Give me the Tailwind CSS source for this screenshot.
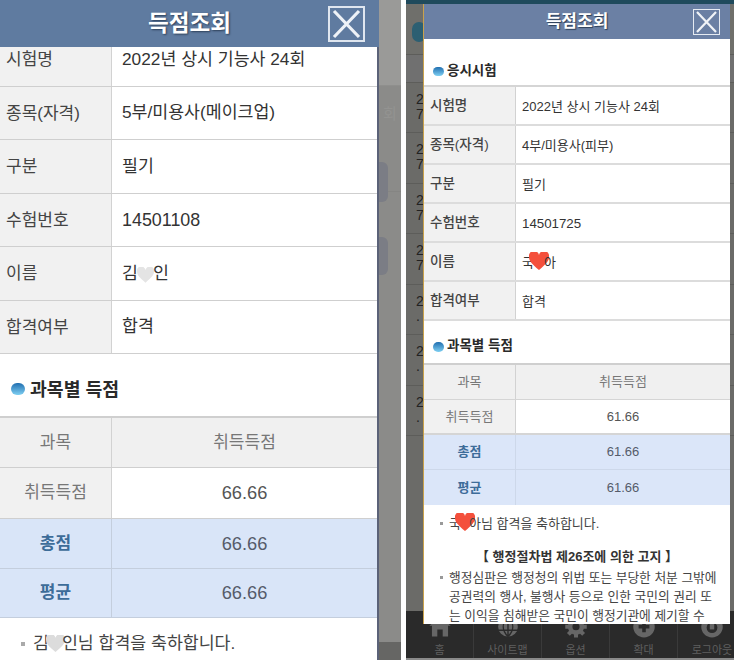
<!DOCTYPE html>
<html lang="ko">
<head>
<meta charset="utf-8">
<script src="https://cdn.jsdelivr.net/npm/@tailwindcss/browser@4"></script>
</head>
<body class="bg-white font-['Liberation_Sans','Noto_Sans_CJK_KR',sans-serif]">
<div class="flex w-[734px] h-[660px] overflow-hidden bg-white">

  <!-- LEFT PHONE -->
  <section class="relative w-[401px] h-[660px] shrink-0 overflow-hidden bg-[#8b8b89]">
    <div class="flex flex-col h-full">
      <div class="h-[86px] bg-[#9a9a98] border-b border-[#8f8f8d]"></div>
      <div class="h-[106px] border-b border-[#858583] pl-[383px] pt-[17px] text-[15px] text-[#939391]">회</div>
      <div class="flex-1"></div>
      <div class="h-[18px] bg-[#666664]"></div>
    </div>
    <div class="absolute left-[378px] top-[162px] w-[10px] h-[40px] rounded-r-md bg-[#7b7d85]"></div>
    <div class="absolute left-[378px] top-[237px] w-[10px] h-[38px] rounded-r-md bg-[#7b7d85]"></div>

    <div class="absolute left-0 top-0 w-[379px] h-[660px] flex flex-col">
      <header class="relative h-[47px] shrink-0 bg-[#5f7ba0] flex items-center justify-center">
        <h1 class="text-[22.5px] font-bold text-white [text-shadow:1px_1px_2px_#2c3e57]">득점조회</h1>
        <div class="absolute left-[328px] top-[6px] w-[37px] h-[36px] border-2 border-[#dfe6ef]">
          <svg viewBox="0 0 33 32" class="w-full h-full"><path d="M4 3 29 29M29 3 4 29" stroke="#eef2f7" stroke-width="3.2" fill="none"/></svg>
        </div>
      </header>
      <div class="flex-1 overflow-hidden bg-white border-r-2 border-[#5b6278]">
        <div class="-mt-[14px] text-[#333] text-[17.3px]">
          <div class="grid grid-cols-[112px_1fr] h-[53.5px] border-b border-[#cfcfcf]"><div class="bg-[#f1f1f1] border-r border-[#d2d2d2] pl-[6px] pt-[1px] flex items-center text-[#444] text-[17px]">시험명</div><div class="pl-[10px] pt-[1px] flex items-center">2022년 상시 기능사 24회</div></div>
          <div class="grid grid-cols-[112px_1fr] h-[53.5px] border-b border-[#cfcfcf]"><div class="bg-[#f1f1f1] border-r border-[#d2d2d2] pl-[6px] pt-[1px] flex items-center text-[#444] text-[17px]">종목(자격)</div><div class="pl-[10px] pt-[1px] flex items-center">5부/미용사(메이크업)</div></div>
          <div class="grid grid-cols-[112px_1fr] h-[53.5px] border-b border-[#cfcfcf]"><div class="bg-[#f1f1f1] border-r border-[#d2d2d2] pl-[6px] pt-[1px] flex items-center text-[#444] text-[17px]">구분</div><div class="pl-[10px] pt-[1px] flex items-center">필기</div></div>
          <div class="grid grid-cols-[112px_1fr] h-[53.5px] border-b border-[#cfcfcf]"><div class="bg-[#f1f1f1] border-r border-[#d2d2d2] pl-[6px] pt-[1px] flex items-center text-[#444] text-[17px]">수험번호</div><div class="pl-[10px] pt-[1px] flex items-center text-[17.9px]">14501108</div></div>
          <div class="grid grid-cols-[112px_1fr] h-[53.5px] border-b border-[#cfcfcf]"><div class="bg-[#f1f1f1] border-r border-[#d2d2d2] pl-[6px] pt-[1px] flex items-center text-[#444] text-[17px]">이름</div><div class="pl-[10px] pt-[1px] flex items-center">김<svg viewBox="0 0 20 18" class="w-[17px] h-[16px] -mx-[1px] mt-[2px]"><path d="M10 18C3 12 0 9 0 5a5 5 0 0 1 10-2 5 5 0 0 1 10 2c0 4-3 7-10 13z" fill="#e4e4e4"/></svg>인</div></div>
          <div class="grid grid-cols-[112px_1fr] h-[53.5px] border-b border-[#cfcfcf]"><div class="bg-[#f1f1f1] border-r border-[#d2d2d2] pl-[6px] pt-[1px] flex items-center text-[#444] text-[17px]">합격여부</div><div class="pl-[10px] pt-[1px] flex items-center">합격</div></div>
        </div>
        <div class="h-[62px] flex items-center pl-[11px] pt-[10px] gap-[5px]">
          <span class="w-[14px] h-[12px] -mt-[3px] rounded-full bg-linear-to-b from-[#1f6fb0] to-[#7fd0f2]"></span>
          <h2 class="text-[18.3px] font-bold text-[#2a2a2a]">과목별 득점</h2>
        </div>
        <div class="text-center text-[18.3px] border-t-2 border-[#cfcfcf]">
          <div class="grid grid-cols-[112px_1fr] h-[50px] border-b border-[#cfcfcf] bg-[#f0f0f0] text-[#777]"><div class="border-r border-[#d2d2d2] flex items-center justify-center text-[17px]">과목</div><div class="flex items-center justify-center text-[17px]">취득득점</div></div>
          <div class="grid grid-cols-[112px_1fr] h-[51px] border-b border-[#cfcfcf] text-[#555]"><div class="bg-[#f1f1f1] border-r border-[#d2d2d2] flex items-center justify-center text-[17px] text-[#777]">취득득점</div><div class="flex items-center justify-center">66.66</div></div>
          <div class="grid grid-cols-[112px_1fr] h-[50px] border-b border-[#c4cedd] bg-[#d9e5f8] text-[#555b6a]"><div class="border-r border-[#c4cedd] flex items-center justify-center text-[17px] font-bold text-[#3d6c99]">총점</div><div class="flex items-center justify-center">66.66</div></div>
          <div class="grid grid-cols-[112px_1fr] h-[49px] border-b border-[#c4cedd] bg-[#d9e5f8] text-[#555b6a]"><div class="border-r border-[#c4cedd] flex items-center justify-center text-[17px] font-bold text-[#3d6c99]">평균</div><div class="flex items-center justify-center">66.66</div></div>
        </div>
        <p class="pl-[21px] pt-[13px] text-[17.3px] text-[#444] flex items-center"><span class="w-[4px] h-[4px] bg-[#aaa] mr-[8px]"></span>김<svg viewBox="0 0 20 18" class="w-[19px] h-[17px] -mx-[3px]"><path d="M10 18C3 12 0 9 0 5a5 5 0 0 1 10-2 5 5 0 0 1 10 2c0 4-3 7-10 13z" fill="#dcdcdc"/></svg>인님 합격을 축하합니다.</p>
      </div>
    </div>
  </section>

  <div class="w-[5px] shrink-0"></div>

  <!-- RIGHT PHONE -->
  <section class="relative w-[328px] h-[660px] shrink-0 overflow-hidden bg-[#6b6b68]">
    <div class="h-[4px] bg-[#1f4a5c]"></div>
    <div class="h-[51px] bg-[#6f6f6b] border-b border-[#5d5d5a] relative">
      <span class="absolute left-[6px] top-[18px] w-[14px] h-[20px] rounded-full bg-[#2c5f72]"></span>
    </div>
    <div class="h-[28px] bg-[#707070] border-b border-[#5d5d5a]"></div>
    <div class="text-[#222] text-[14px] leading-[15px]">
      <div class="h-[50px] pl-[10px] pt-[9px] border-b border-[#5d5d5a]">2<br>7</div>
      <div class="h-[51px] pl-[10px] pt-[9px] border-b border-[#5d5d5a]">2<br>7</div>
      <div class="h-[50px] pl-[10px] pt-[9px] border-b border-[#5d5d5a]">2<br>7</div>
      <div class="h-[51px] pl-[10px] pt-[9px] border-b border-[#5d5d5a]">2<br>7</div>
      <div class="h-[50px] pl-[10px] pt-[9px] border-b border-[#5d5d5a]">2<br>.</div>
      <div class="h-[51px] pl-[10px] pt-[9px] border-b border-[#5d5d5a]">2<br>.</div>
      <div class="h-[50px] pl-[10px] pt-[9px] border-b border-[#5d5d5a]">2<br>.</div>
    </div>
    <nav class="absolute left-0 right-0 top-[611px] h-[49px] bg-[#2a2a2a] border-b-2 border-[#8a8a8a] flex">
      <div class="w-[68px] shrink-0 flex flex-col items-center border-r border-[#3a3a3a]">
        <svg viewBox="0 0 24 24" class="w-[24px] h-[24px] mt-[5px]"><path d="M12 1 0 11h3v12h6v-8h6v8h6V11h3z" fill="#666"/></svg>
        <span class="text-[11px] text-[#5f5f5f] mt-[4px]">홈</span>
      </div>
      <div class="w-[68px] shrink-0 flex flex-col items-center border-r border-[#3a3a3a]">
        <svg viewBox="0 0 24 24" class="w-[24px] h-[24px] mt-[5px]"><circle cx="12" cy="12" r="11" fill="#666"/><path d="M1 8h22M1 16h22M12 1v22M12 1C5 8 5 16 12 23M12 1c7 7 7 15 0 22" stroke="#2a2a2a" stroke-width="1.6" fill="none"/></svg>
        <span class="text-[11px] text-[#5f5f5f] mt-[4px]">사이트맵</span>
      </div>
      <div class="w-[68px] shrink-0 flex flex-col items-center border-r border-[#3a3a3a]">
        <svg viewBox="0 0 24 24" class="w-[24px] h-[24px] mt-[5px]"><circle cx="12" cy="12" r="6.5" fill="none" stroke="#666" stroke-width="5"/><path d="M12 0v5M12 19v5M0 12h5M19 12h5M3.5 3.5l3.5 3.5M17 17l3.5 3.5M20.5 3.5 17 7M7 17l-3.5 3.5" stroke="#666" stroke-width="4.5"/></svg>
        <span class="text-[11px] text-[#5f5f5f] mt-[4px]">옵션</span>
      </div>
      <div class="w-[68px] shrink-0 flex flex-col items-center border-r border-[#3a3a3a]">
        <svg viewBox="0 0 24 24" class="w-[24px] h-[24px] mt-[5px]"><circle cx="12" cy="12" r="12" fill="#666"/><path d="M12 6v12M6 12h12" stroke="#2a2a2a" stroke-width="4"/></svg>
        <span class="text-[11px] text-[#5f5f5f] mt-[4px]">확대</span>
      </div>
      <div class="w-[68px] shrink-0 flex flex-col items-center">
        <svg viewBox="0 0 24 24" class="w-[24px] h-[24px] mt-[5px]"><circle cx="12" cy="12" r="12" fill="#666"/><circle cx="12" cy="13" r="6" fill="#2a2a2a"/><path d="M12 4v11" stroke="#666" stroke-width="5"/></svg>
        <span class="text-[11px] text-[#5f5f5f] mt-[4px] whitespace-nowrap">로그아웃</span>
      </div>
    </nav>

    <div class="absolute left-[17px] top-[4px] w-[307px] h-[620px] flex flex-col overflow-hidden border-l border-[#c9a24c] bg-white">
      <header class="relative h-[35px] shrink-0 bg-[#6b80a4] flex items-center justify-center">
        <h1 class="text-[17px] font-bold text-white [text-shadow:1px_1px_1px_#2c3e57]">득점조회</h1>
        <div class="absolute left-[269px] top-[5px] w-[27px] h-[26px] border border-[#e6ebf2]">
          <svg viewBox="0 0 25 24" class="w-full h-full"><path d="M3 2 22 22M22 2 3 22" stroke="#f0f3f7" stroke-width="2.2" fill="none"/></svg>
        </div>
      </header>
      <div class="h-[48px] shrink-0 flex items-center pl-[9px] pt-[19px] gap-[3px] border-b-2 border-[#d5d5d5]">
        <span class="w-[11px] h-[9px] rounded-full bg-linear-to-b from-[#1f6fb0] to-[#7fd0f2]"></span>
        <h2 class="text-[13.5px] font-bold text-[#2a2a2a]">응시시험</h2>
      </div>
      <div class="text-[13px] text-[#333]">
        <div class="grid grid-cols-[92px_1fr] h-[39px] border-b-2 border-[#dcdcdc]"><div class="bg-[#f1f1f1] border-r border-[#d2d2d2] pl-[6px] pt-[2px] flex items-center text-[#444] text-[13.5px] font-medium">시험명</div><div class="pl-[6px] pt-[2px] flex items-center">2022년 상시 기능사 24회</div></div>
        <div class="grid grid-cols-[92px_1fr] h-[39px] border-b-2 border-[#dcdcdc]"><div class="bg-[#f1f1f1] border-r border-[#d2d2d2] pl-[6px] pt-[2px] flex items-center text-[#444] text-[13.5px] font-medium">종목(자격)</div><div class="pl-[6px] pt-[2px] flex items-center">4부/미용사(피부)</div></div>
        <div class="grid grid-cols-[92px_1fr] h-[39px] border-b-2 border-[#dcdcdc]"><div class="bg-[#f1f1f1] border-r border-[#d2d2d2] pl-[6px] pt-[2px] flex items-center text-[#444] text-[13.5px] font-medium">구분</div><div class="pl-[6px] pt-[2px] flex items-center">필기</div></div>
        <div class="grid grid-cols-[92px_1fr] h-[39px] border-b-2 border-[#dcdcdc]"><div class="bg-[#f1f1f1] border-r border-[#d2d2d2] pl-[6px] pt-[2px] flex items-center text-[#444] text-[13.5px] font-medium">수험번호</div><div class="pl-[6px] pt-[2px] flex items-center text-[13.3px]">14501725</div></div>
        <div class="grid grid-cols-[92px_1fr] h-[39px] border-b-2 border-[#dcdcdc]"><div class="bg-[#f1f1f1] border-r border-[#d2d2d2] pl-[6px] pt-[2px] flex items-center text-[#444] text-[13.5px] font-medium">이름</div><div class="pl-[6px] pt-[2px] flex items-center">국<svg viewBox="0 0 20 18" class="w-[20px] h-[18px] -mx-[5px] -mt-[3px]"><path d="M10 18C3 12 0 9 0 5a5 5 0 0 1 10-2 5 5 0 0 1 10 2c0 4-3 7-10 13z" fill="#f4503c"/></svg>아</div></div>
        <div class="grid grid-cols-[92px_1fr] h-[39px] border-b-2 border-[#dcdcdc]"><div class="bg-[#f1f1f1] border-r border-[#d2d2d2] pl-[6px] pt-[2px] flex items-center text-[#444] text-[13.5px] font-medium">합격여부</div><div class="pl-[6px] pt-[2px] flex items-center">합격</div></div>
      </div>
      <div class="h-[42px] shrink-0 flex items-center pl-[9px] pt-[9px] gap-[3px]">
        <span class="w-[11px] h-[10px] rounded-full bg-linear-to-b from-[#1f6fb0] to-[#7fd0f2]"></span>
        <h2 class="text-[13.5px] font-bold text-[#2a2a2a]">과목별 득점</h2>
      </div>
      <div class="text-center text-[13px] border-t-2 border-[#cfcfcf]">
        <div class="grid grid-cols-[92px_1fr] h-[35px] border-b border-[#d5d5d5] bg-[#f0f0f0] text-[#777]"><div class="border-r border-[#d2d2d2] flex items-center justify-center">과목</div><div class="flex items-center justify-center">취득득점</div></div>
        <div class="grid grid-cols-[92px_1fr] h-[35px] border-b-2 border-[#d5d5d5] text-[#555]"><div class="bg-[#f1f1f1] border-r border-[#d2d2d2] flex items-center justify-center text-[#777]">취득득점</div><div class="flex items-center justify-center">61.66</div></div>
        <div class="grid grid-cols-[92px_1fr] h-[35px] border-b border-[#cdd8ea] bg-[#dbe6f9] text-[#555b6a]"><div class="border-r border-[#cdd8ea] flex items-center justify-center font-bold text-[#3d6c99]">총점</div><div class="flex items-center justify-center">61.66</div></div>
        <div class="grid grid-cols-[92px_1fr] h-[35px] bg-[#dbe6f9] text-[#555b6a]"><div class="border-r border-[#cdd8ea] flex items-center justify-center font-bold text-[#3d6c99]">평균</div><div class="flex items-center justify-center">61.66</div></div>
      </div>
      <p class="pl-[16px] pt-[9px] text-[13px] text-[#444] flex items-center"><span class="w-[3px] h-[3px] bg-[#999] mr-[6px]"></span>국<svg viewBox="0 0 20 18" class="w-[20px] h-[18px] -mx-[6px] -mt-[3px]"><path d="M10 18C3 12 0 9 0 5a5 5 0 0 1 10-2 5 5 0 0 1 10 2c0 4-3 7-10 13z" fill="#f4503c"/></svg>아님 합격을 축하합니다.</p>
      <h3 class="mt-[13px] text-center text-[13px] font-bold text-[#333]">【 행정절차법 제26조에 의한 고지 】</h3>
      <p class="relative pl-[25px] pr-[10px] mt-[2px] text-[12.75px] leading-[19px] text-[#444]"><span class="absolute left-[16px] top-[8px] w-[3px] h-[3px] bg-[#999]"></span>행정심판은 행정청의 위법 또는 부당한 처분 그밖에 공권력의 행사, 불행사 등으로 인한 국민의 권리 또는 이익을 침해받은 국민이 행정기관에 제기할 수</p>
    </div>
  </section>
</div>
</body>
</html>
